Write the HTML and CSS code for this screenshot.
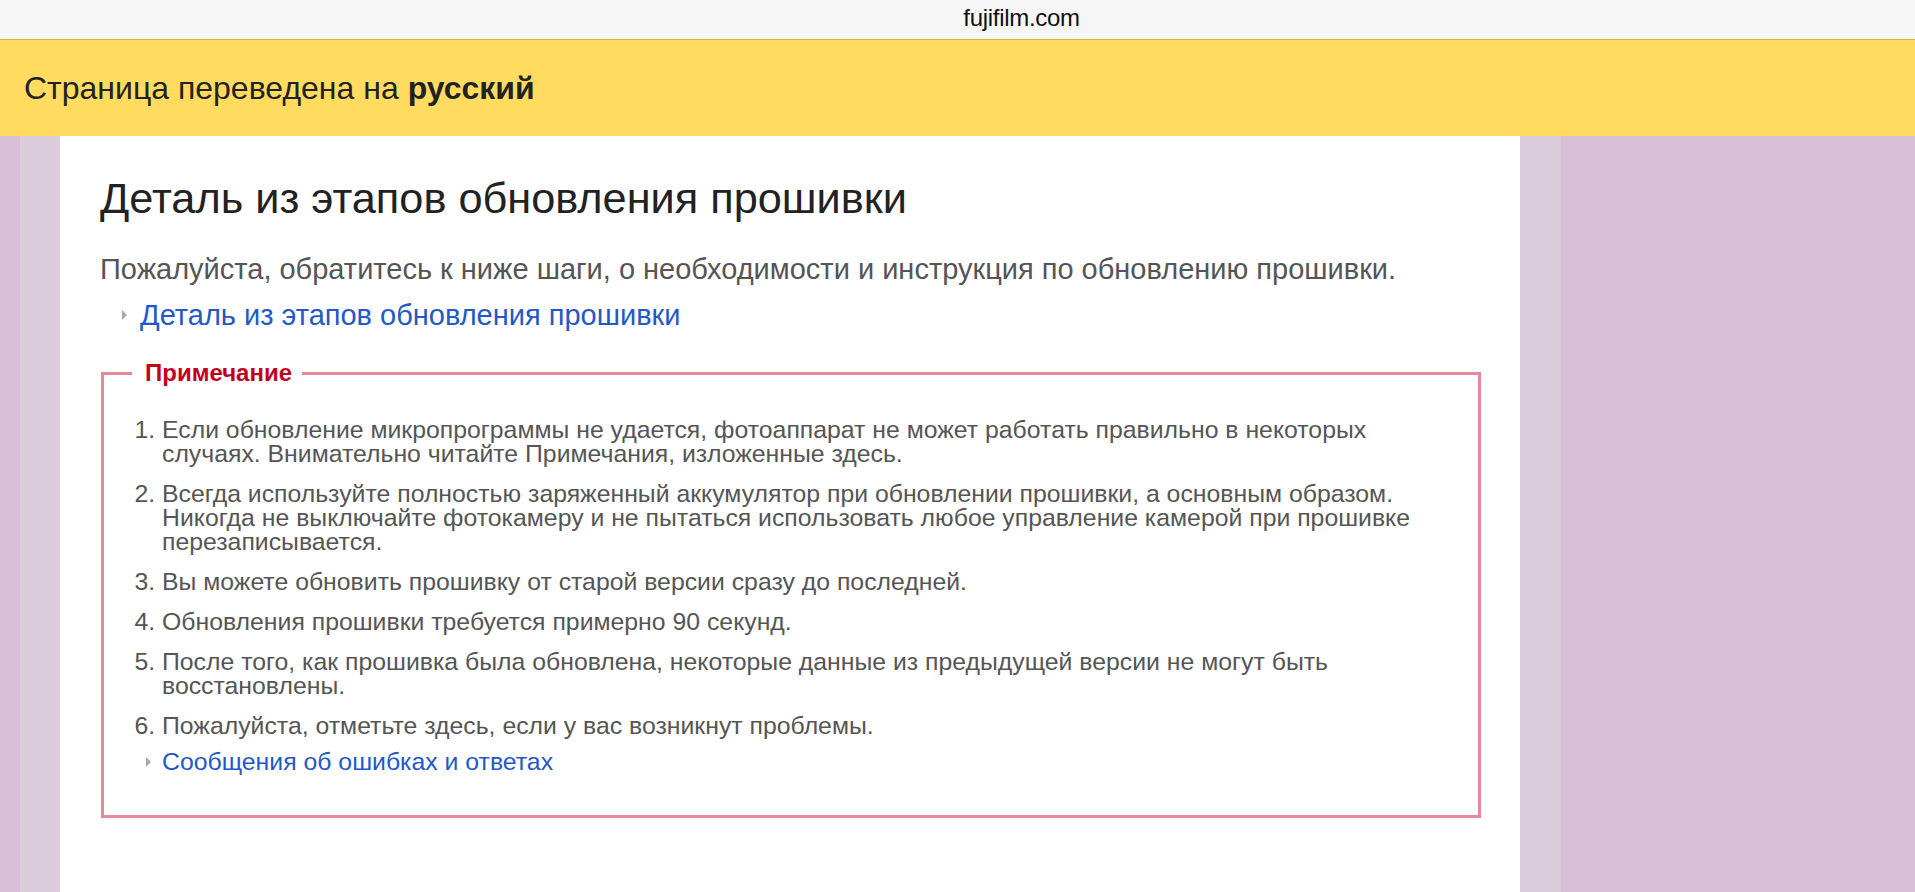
FILE: index.html
```html
<!DOCTYPE html>
<html lang="ru">
<head>
<meta charset="utf-8">
<title>fujifilm.com</title>
<link rel="stylesheet" href="styles.css">
</head>
<body>
<header class="urlbar"><span class="url">fujifilm.com</span></header>
<div class="translate-banner">Страница переведена на <b>русский</b></div>
<div class="page">
  <div class="stripe stripe-dark stripe-left"></div>
  <div class="stripe stripe-light stripe-inner"></div>
  <main class="panel">
    <h1 class="title">Деталь из этапов обновления прошивки</h1>
    <p class="intro">Пожалуйста, обратитесь к ниже шаги, о необходимости и инструкция по обновлению прошивки.</p>
    <div class="arrow-link intro-link"><span class="tri"></span><a href="#">Деталь из этапов обновления прошивки</a></div>
    <fieldset class="note">
      <legend class="note-title">Примечание</legend>
      <ol class="note-list">
        <li>Если обновление микропрограммы не удается, фотоаппарат не может работать правильно в некоторых случаях. Внимательно читайте Примечания, изложенные здесь.</li>
        <li>Всегда используйте полностью заряженный аккумулятор при обновлении прошивки, а основным образом. Никогда не выключайте фотокамеру и не пытаться использовать любое управление камерой при прошивке перезаписывается.</li>
        <li>Вы можете обновить прошивку от старой версии сразу до последней.</li>
        <li>Обновления прошивки требуется примерно 90 секунд.</li>
        <li>После того, как прошивка была обновлена, некоторые данные из предыдущей версии не могут быть восстановлены.</li>
        <li>Пожалуйста, отметьте здесь, если у вас возникнут проблемы.</li>
      </ol>
      <div class="arrow-link note-link"><span class="tri"></span><a href="#">Сообщения об ошибках и ответах</a></div>
    </fieldset>
  </main>
  <div class="stripe stripe-light stripe-inner-r"></div>
  <div class="stripe stripe-dark stripe-right"></div>
</div>
</body>
</html>
```
FILE: styles.css
```css
html, body {
  margin: 0;
  padding: 0;
  height: 892px;
  overflow: hidden;
}
body {
  font-family: "Liberation Sans", Arial, "Helvetica Neue", sans-serif;
  background: #d8bed6;
}
.urlbar {
  height: 39px;
  background: #f6f6f6;
  border-bottom: 1px solid #d4b552;
  display: flex;
  align-items: center;
  justify-content: center;
}
.url {
  font-size: 24px;
  color: #111;
  letter-spacing: -0.3px;
  transform: translate(64px, -2px);
}
.translate-banner {
  height: 96px;
  background: #ffdb60;
  display: flex;
  align-items: center;
  padding-left: 24px;
  font-size: 32px;
  color: #222;
}
.translate-banner b { font-weight: bold; margin-left: 0.28em; }
.page {
  display: flex;
  height: 756px;
}
.stripe { height: 100%; }
.stripe-dark { background: #d8bed6; }
.stripe-light { background: #dbcddc; }
.stripe-left { width: 20px; }
.stripe-inner { width: 40px; }
.stripe-inner-r { width: 41px; }
.stripe-right { flex: 1; }
.panel {
  width: 1460px;
  box-sizing: border-box;
  background: #fff;
  padding: 37px 39px 0 40px;
}
.title {
  margin: 0;
  font-size: 43.3px;
  line-height: 50px;
  font-weight: normal;
  color: #222;
}
.intro {
  margin: 29px 0 0;
  font-size: 29px;
  line-height: 34px;
  color: #555;
}
.arrow-link {
  display: flex;
  align-items: center;
}
.arrow-link a {
  color: #2358c8;
  text-decoration: none;
}
.tri {
  width: 0;
  height: 0;
  border-top: 5px solid transparent;
  border-bottom: 5px solid transparent;
  border-left: 5px solid #aaaaaa;
}
.intro-link {
  margin-top: 12px;
  padding-left: 22px;
  font-size: 29px;
  line-height: 34px;
}
.intro-link .tri { margin-right: 13px; }
.note {
  margin: 27px 0 0 1px;
  padding: 0 0 41px;
  border: 3px solid #e3899a;
  min-width: 0;
}
.note-title {
  margin-left: 28px;
  padding: 0 10px 0 13px;
  font-size: 24px;
  line-height: 28px;
  font-weight: bold;
  color: #c3001b;
}
.note-list {
  margin: 31px 0 0;
  padding: 0 40px 0 58px;
  font-size: 24.8px;
  line-height: 24px;
  color: #555;
}
.note-list li { margin-bottom: 16px; }
.note-list li:last-child { margin-bottom: 0; }
.note-link {
  margin-top: 12px;
  padding-left: 42px;
  font-size: 24.8px;
  line-height: 24px;
}
.note-link .tri { margin-right: 11px; }
```
